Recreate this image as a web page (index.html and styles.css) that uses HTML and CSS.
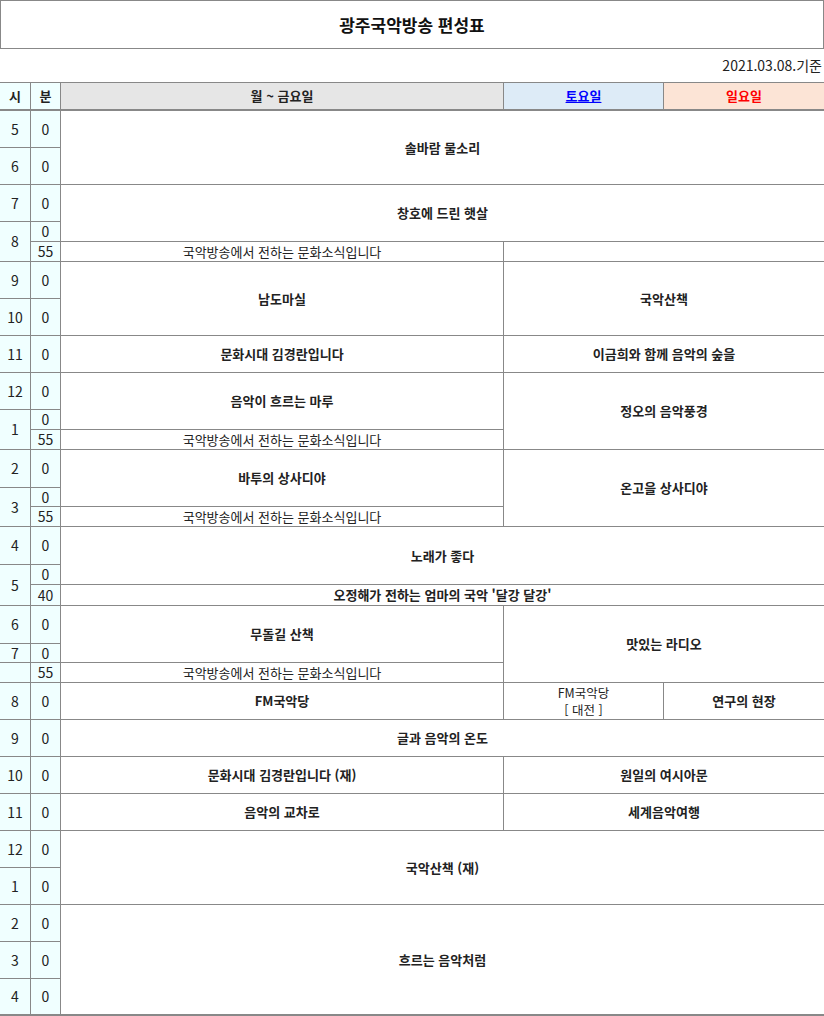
FILE: index.html
```html
<!DOCTYPE html>
<html lang="ko">
<head>
<meta charset="utf-8">
<title>광주국악방송 편성표</title>
<link rel="stylesheet" href="styles.css">
</head>
<body>
<div class="page">
  <div class="title">광주국악방송 편성표</div>
  <div class="date">2021.03.08.기준</div>
  <div class="grid">
    <div class="cell head tm ch r1">시</div>
    <div class="cell head tm cm r1">분</div>
    <div class="cell head wkhead cw r1">월 ~ 금요일</div>
    <div class="cell head sathead cs r1"><a class="satlink">토요일</a></div>
    <div class="cell head sunhead cu r1">일요일</div>

    <div class="cell tm ch r2">5</div><div class="cell tm cm r2">0</div>
    <div class="cell tm ch r3">6</div><div class="cell tm cm r3">0</div>
    <div class="cell tm ch r4">7</div><div class="cell tm cm r4">0</div>
    <div class="cell tm ch r5 s2">8</div><div class="cell tm cm r5">0</div><div class="cell tm cm r6">55</div>
    <div class="cell tm ch r7">9</div><div class="cell tm cm r7">0</div>
    <div class="cell tm ch r8">10</div><div class="cell tm cm r8">0</div>
    <div class="cell tm ch r9">11</div><div class="cell tm cm r9">0</div>
    <div class="cell tm ch r10">12</div><div class="cell tm cm r10">0</div>
    <div class="cell tm ch r11 s2">1</div><div class="cell tm cm r11">0</div><div class="cell tm cm r12">55</div>
    <div class="cell tm ch r13">2</div><div class="cell tm cm r13">0</div>
    <div class="cell tm ch r14 s2">3</div><div class="cell tm cm r14">0</div><div class="cell tm cm r15">55</div>
    <div class="cell tm ch r16">4</div><div class="cell tm cm r16">0</div>
    <div class="cell tm ch r17 s2">5</div><div class="cell tm cm r17">0</div><div class="cell tm cm r18">40</div>
    <div class="cell tm ch r19">6</div><div class="cell tm cm r19">0</div>
    <div class="cell tm ch r20">7</div><div class="cell tm cm r20">0</div>
    <div class="cell tm ch r21"></div><div class="cell tm cm r21">55</div>
    <div class="cell tm ch r22">8</div><div class="cell tm cm r22">0</div>
    <div class="cell tm ch r23">9</div><div class="cell tm cm r23">0</div>
    <div class="cell tm ch r24">10</div><div class="cell tm cm r24">0</div>
    <div class="cell tm ch r25">11</div><div class="cell tm cm r25">0</div>
    <div class="cell tm ch r26">12</div><div class="cell tm cm r26">0</div>
    <div class="cell tm ch r27">1</div><div class="cell tm cm r27">0</div>
    <div class="cell tm ch r28">2</div><div class="cell tm cm r28">0</div>
    <div class="cell tm ch r29">3</div><div class="cell tm cm r29">0</div>
    <div class="cell tm ch r30">4</div><div class="cell tm cm r30">0</div>

    <div class="cell prog call r2 s2">솔바람 물소리</div>
    <div class="cell prog call r4 s2">창호에 드린 햇살</div>
    <div class="cell news cw r6">국악방송에서 전하는 문화소식입니다</div>
    <div class="cell cwe r6"></div>
    <div class="cell prog cw r7 s2">남도마실</div>
    <div class="cell prog cwe r7 s2">국악산책</div>
    <div class="cell prog cw r9">문화시대 김경란입니다</div>
    <div class="cell prog cwe r9">이금희와 함께 음악의 숲을</div>
    <div class="cell prog cw r10 s2">음악이 흐르는 마루</div>
    <div class="cell news cw r12">국악방송에서 전하는 문화소식입니다</div>
    <div class="cell prog cwe r10 s3">정오의 음악풍경</div>
    <div class="cell prog cw r13 s2">바투의 상사디야</div>
    <div class="cell news cw r15">국악방송에서 전하는 문화소식입니다</div>
    <div class="cell prog cwe r13 s3">온고을 상사디야</div>
    <div class="cell prog call r16 s2">노래가 좋다</div>
    <div class="cell prog call r18">오정해가 전하는 엄마의 국악 '달강 달강'</div>
    <div class="cell prog cw r19 s2">무돌길 산책</div>
    <div class="cell news cw r21">국악방송에서 전하는 문화소식입니다</div>
    <div class="cell prog cwe r19 s3">맛있는 라디오</div>
    <div class="cell prog cw r22">FM국악당</div>
    <div class="cell news stack cs r22"><span class="line">FM국악당</span><span class="line">[ 대전 ]</span></div>
    <div class="cell prog cu r22">연구의 현장</div>
    <div class="cell prog call r23">글과 음악의 온도</div>
    <div class="cell prog cw r24">문화시대 김경란입니다 (재)</div>
    <div class="cell prog cwe r24">원일의 여시아문</div>
    <div class="cell prog cw r25">음악의 교차로</div>
    <div class="cell prog cwe r25">세계음악여행</div>
    <div class="cell prog call r26 s2">국악산책 (재)</div>
    <div class="cell prog call r28 s3">흐르는 음악처럼</div>
  </div>
</div>
</body>
</html>
```
FILE: styles.css
```css
html, body {
  margin: 0;
  padding: 0;
  background: #ffffff;
}
body {
  font-family: "Noto Sans CJK KR", "Noto Sans", sans-serif;
  color: #222222;
}
.page {
  width: 824px;
}
.title {
  box-sizing: border-box;
  height: 49px;
  border: 1px solid #888888;
  display: flex;
  align-items: center;
  justify-content: center;
  font-size: 17px;
  font-weight: 700;
  color: #111111;
}
.date {
  height: 33px;
  line-height: 33px;
  text-align: right;
  padding-right: 2px;
  font-size: 14px;
}
.grid {
  display: grid;
  grid-template-columns: 30px 29px 442px 159px 160px;
  grid-template-rows: 27px 36px 36px 36px 19px 19px 36px 36px 36px 36px 19px 19px 37px 18px 19px 37px 19px 20px 37px 18px 19px 36px 36px 36px 36px 36px 36px 36px 36px 35px;
  gap: 1px;
  background: #888888;
  border-top: 1px solid #888888;
  border-bottom: 2px solid #888888;
}
.cell {
  background: #ffffff;
  display: flex;
  align-items: center;
  justify-content: center;
  text-align: center;
  font-size: 13px;
  line-height: 1.2;
  overflow: hidden;
}
.head {
  box-sizing: border-box;
  border-bottom: 1px solid #888888;
  font-weight: 700;
  font-size: 13px;
}
.tm {
  background: #f0ffff;
  font-size: 14px;
}
.head.tm {
  background: #f0ffff;
  font-size: 13px;
}
.wkhead { background: #e6e6e6; }
.sathead { background: #ddebf7; }
.sunhead { background: #fce4d6; color: #ff0000; }
.satlink {
  color: #0000ff;
  text-decoration: underline;
}
.prog { font-weight: 700; }
.news { font-weight: 400; }
.stack {
  flex-direction: column;
  gap: 2px;
}
.stack .line {
  display: block;
  font-size: 12.5px;
  line-height: 15px;
}

.ch { grid-column: 1; }
.cm { grid-column: 2; }
.cw { grid-column: 3; }
.cs { grid-column: 4; }
.cu { grid-column: 5; }
.cwe { grid-column: 4 / 6; }
.call { grid-column: 3 / 6; }

.s2 { grid-row-end: span 2; }
.s3 { grid-row-end: span 3; }

.r1 { grid-row-start: 1; }
.r2 { grid-row-start: 2; }
.r3 { grid-row-start: 3; }
.r4 { grid-row-start: 4; }
.r5 { grid-row-start: 5; }
.r6 { grid-row-start: 6; }
.r7 { grid-row-start: 7; }
.r8 { grid-row-start: 8; }
.r9 { grid-row-start: 9; }
.r10 { grid-row-start: 10; }
.r11 { grid-row-start: 11; }
.r12 { grid-row-start: 12; }
.r13 { grid-row-start: 13; }
.r14 { grid-row-start: 14; }
.r15 { grid-row-start: 15; }
.r16 { grid-row-start: 16; }
.r17 { grid-row-start: 17; }
.r18 { grid-row-start: 18; }
.r19 { grid-row-start: 19; }
.r20 { grid-row-start: 20; }
.r21 { grid-row-start: 21; }
.r22 { grid-row-start: 22; }
.r23 { grid-row-start: 23; }
.r24 { grid-row-start: 24; }
.r25 { grid-row-start: 25; }
.r26 { grid-row-start: 26; }
.r27 { grid-row-start: 27; }
.r28 { grid-row-start: 28; }
.r29 { grid-row-start: 29; }
.r30 { grid-row-start: 30; }
```
